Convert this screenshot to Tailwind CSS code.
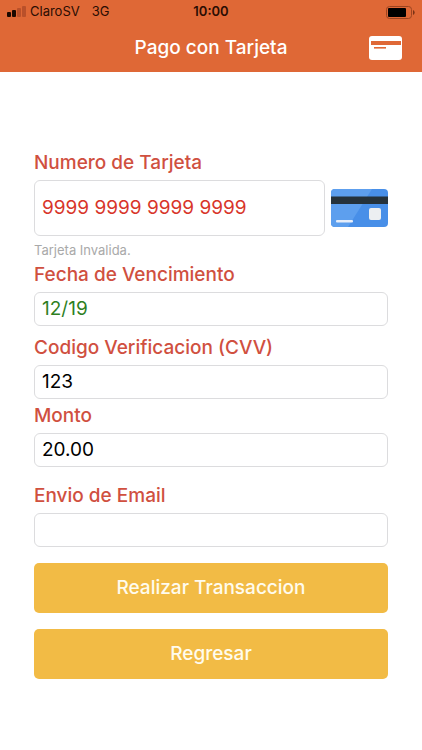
<!DOCTYPE html>
<html lang="es">
<head>
    <meta charset="UTF-8">
    <meta name="viewport" content="width=device-width, initial-scale=1.0">
    <title>Pago con Tarjeta</title>
    <script src="https://cdn.jsdelivr.net/npm/@tailwindcss/browser@4"></script>
</head>
<body class="bg-white font-['Inter',sans-serif] min-h-screen">
    <header class="bg-[#df6836]">
        <!-- Status bar -->
        <div class="grid grid-cols-3 items-center h-6 px-[7px] text-[13px] text-[#2a0d03]">
            <div class="flex items-center">
                <svg class="w-[19px] h-3 mr-1" viewBox="0 0 19 12" fill="#1c0800">
                    <rect x="0" y="6" width="4" height="5" rx="1"/>
                    <rect x="5" y="4" width="4" height="7" rx="1"/>
                    <rect x="10" y="2" width="4" height="9" rx="1" fill="#b9502a"/>
                    <rect x="15" y="0" width="4" height="11" rx="1" fill="#b9502a"/>
                </svg>
                <span>ClaroSV</span>
                <span class="ml-3">3G</span>
            </div>
            <div class="text-center font-semibold">10:00</div>
            <svg class="w-[30px] h-[13px] justify-self-end" viewBox="0 0 30 13">
                <rect x="1.500" y="0.500" width="25" height="12" rx="3" fill="none" stroke="#9c4420"/>
                <rect x="3" y="2" width="18" height="9" rx="1" fill="#000"/>
                <path d="M28 4v5a2.700 2.700 0 0 0 0-5z" fill="#7a3215"/>
            </svg>
        </div>

        <!-- Title bar -->
        <div class="grid grid-cols-[1fr_auto_1fr] items-center h-12 px-5">
            <h1 class="col-start-2 text-[19px] font-medium text-white">Pago con Tarjeta</h1>
            <svg class="w-[33px] h-6 justify-self-end" viewBox="0 0 33 24">
                <rect width="33" height="24" rx="3" fill="#fff"/>
                <rect x="2" y="5" width="30" height="4" fill="#df6836"/>
                <rect x="5" y="11" width="12" height="1.600" fill="#df6836"/>
            </svg>
        </div>
    </header>

    <form class="flex flex-col px-[34px] pt-[79px] pb-8 text-[19px] leading-6">
        <label for="tarjeta" class="font-medium text-[#d0503f]">Numero de Tarjeta</label>
        <div class="flex items-center gap-1.5 mt-[5px]">
            <input id="tarjeta" type="text" value="9999 9999 9999 9999" class="flex-1 min-w-0 h-14 px-[7px] pb-0.5 rounded-md border border-[#dcdcde] text-[#d8352a]">
            <svg class="w-[57px] h-[38px] shrink-0" viewBox="0 0 57 38">
                <rect width="57" height="38" rx="4" fill="#488fe8"/>
                <path d="M4 0H41L17 38H4a4 4 0 0 1-4-4V4a4 4 0 0 1 4-4z" fill="#5d9fee"/>
                <rect y="7.500" width="57" height="7.500" fill="#25323b"/>
                <rect x="38" y="19" width="12" height="12" rx="2" fill="#eceff1"/>
                <rect x="5" y="31" width="17" height="2.500" rx="1" fill="#e6eefa"/>
            </svg>
        </div>
        <p class="mt-1 text-[13px] leading-5 text-[#a9a9a9]">Tarjeta Invalida.</p>

        <label for="fecha" class="mt-[3px] font-medium text-[#d0503f]">Fecha de Vencimiento</label>
        <input id="fecha" type="text" value="12/19" class="mt-[5px] h-[34px] px-[7px] pb-0.5 rounded-md border border-[#dcdcde] text-[#2f7f1f]">

        <label for="cvv" class="mt-[10px] font-medium text-[#d0503f]">Codigo Verificacion (CVV)</label>
        <input id="cvv" type="text" value="123" class="mt-[5px] h-[34px] px-[7px] pb-0.5 rounded-md border border-[#dcdcde] text-black">

        <label for="monto" class="mt-[5px] font-medium text-[#d0503f]">Monto</label>
        <input id="monto" type="text" value="20.00" class="mt-[5px] h-[34px] px-[7px] pb-0.5 rounded-md border border-[#dcdcde] text-black">

        <label for="email" class="mt-[17px] font-medium text-[#d0503f]">Envio de Email</label>
        <input id="email" type="email" class="mt-[5px] h-[34px] px-[7px] pb-0.5 rounded-md border border-[#dcdcde] text-black">

        <button type="button" class="mt-4 h-[50px] rounded-[5px] bg-[#f2bb45] font-medium text-[#fffbee]">Realizar Transaccion</button>
        <button type="button" class="mt-4 h-[50px] rounded-[5px] bg-[#f2bb45] font-medium text-[#fffbee]">Regresar</button>
    </form>
</body>
</html>
